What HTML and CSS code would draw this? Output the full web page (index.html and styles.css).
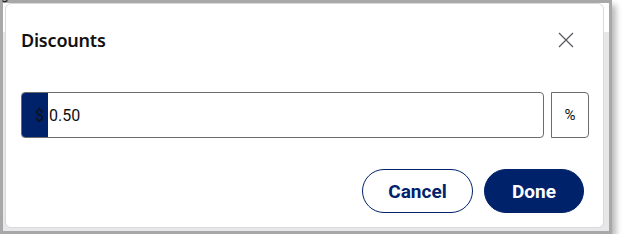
FILE: index.html
```html
<!DOCTYPE html>
<html>
<head>
<meta charset="utf-8">
<link rel="stylesheet" href="styles.css">
</head>
<body>
<div class="frame">
  <svg class="mark" width="6" height="4" viewBox="0 0 6 4"><path d="M0.5 0.5 Q2 3 5.5 0.5" fill="none" stroke="#222" stroke-width="1.2"/></svg>
  <div class="card">
    <div class="header">
      <div class="title">Discounts</div>
      <button class="close" aria-label="Close">
        <svg width="16" height="16" viewBox="0 0 16 16"><path d="M1 1 L15 15 M15 1 L1 15" stroke="#5a5a62" stroke-width="1.3" fill="none"/></svg>
      </button>
    </div>
    <div class="row">
      <div class="field">
        <span class="prefix">$</span>
        <span class="value">0.50</span>
      </div>
      <div class="unit">%</div>
    </div>
    <div class="actions">
      <button class="btn btn-outline">Cancel</button>
      <button class="btn btn-solid">Done</button>
    </div>
  </div>
</div>
</body>
</html>
```

FILE: styles.css
```css
html, body {
  margin: 0;
  padding: 0;
  background: #ffffff;
}

.frame {
  position: relative;
  box-sizing: border-box;
  width: 612px;
  height: 234px;
  border: 3px solid #a8a8a8;
  background: linear-gradient(#ffffff 0 29px, #e7e7ea 29px);
  box-shadow: 4px 5px 6px rgba(0, 0, 0, 0.28);
  padding: 0 5px 3px 2px;
  display: flex;
  flex-direction: column;
}

.mark {
  position: absolute;
  left: -1px;
  top: -3px;
}

.card {
  flex: 1;
  box-sizing: border-box;
  background: #ffffff;
  border: 1px solid #d9d9d9;
  border-radius: 6px;
  padding: 20px 14px 14px 15px;
  display: flex;
  flex-direction: column;
}

.header {
  height: 32px;
  display: flex;
  align-items: center;
  justify-content: space-between;
}

.title {
  font-family: "Noto Sans", sans-serif;
  font-weight: 600;
  font-size: 18px;
  color: #111111;
  letter-spacing: -0.2px;
}

.close {
  background: none;
  border: 0;
  padding: 0;
  margin-right: 15px;
  width: 16px;
  height: 16px;
  display: flex;
}

.row {
  margin-top: 36px;
  height: 46px;
  display: flex;
  gap: 7px;
}

.field {
  flex: 1;
  box-sizing: border-box;
  border: 1px solid #6b6b6b;
  border-radius: 4px;
  display: flex;
  align-items: center;
  overflow: hidden;
}

.prefix {
  width: 26px;
  align-self: stretch;
  background: #00226b;
  color: #111111;
  font-family: Roboto, sans-serif;
  font-size: 16px;
  display: flex;
  align-items: center;
  justify-content: flex-end;
  padding-right: 4px;
  box-sizing: border-box;
}

.value {
  margin-left: 1px;
  font-family: Roboto, sans-serif;
  font-size: 16px;
  color: #111111;
}

.unit {
  width: 38px;
  box-sizing: border-box;
  border: 1px solid #6b6b6b;
  border-radius: 0 4px 4px 0;
  display: flex;
  align-items: center;
  justify-content: center;
  font-family: Roboto, sans-serif;
  font-size: 15px;
  color: #111111;
}

.actions {
  margin-top: 31px;
  display: flex;
  justify-content: flex-end;
  gap: 11px;
  padding-right: 5px;
}

.btn {
  height: 44px;
  border-radius: 22px;
  font-family: Roboto, sans-serif;
  font-weight: 700;
  font-size: 19px;
  box-sizing: border-box;
  padding: 0;
  cursor: pointer;
}

.btn-outline {
  width: 111px;
  background: #ffffff;
  color: #00226b;
  border: 1px solid #00226b;
}

.btn-solid {
  width: 100px;
  background: #00226b;
  color: #ffffff;
  border: 1px solid #00226b;
}
```
